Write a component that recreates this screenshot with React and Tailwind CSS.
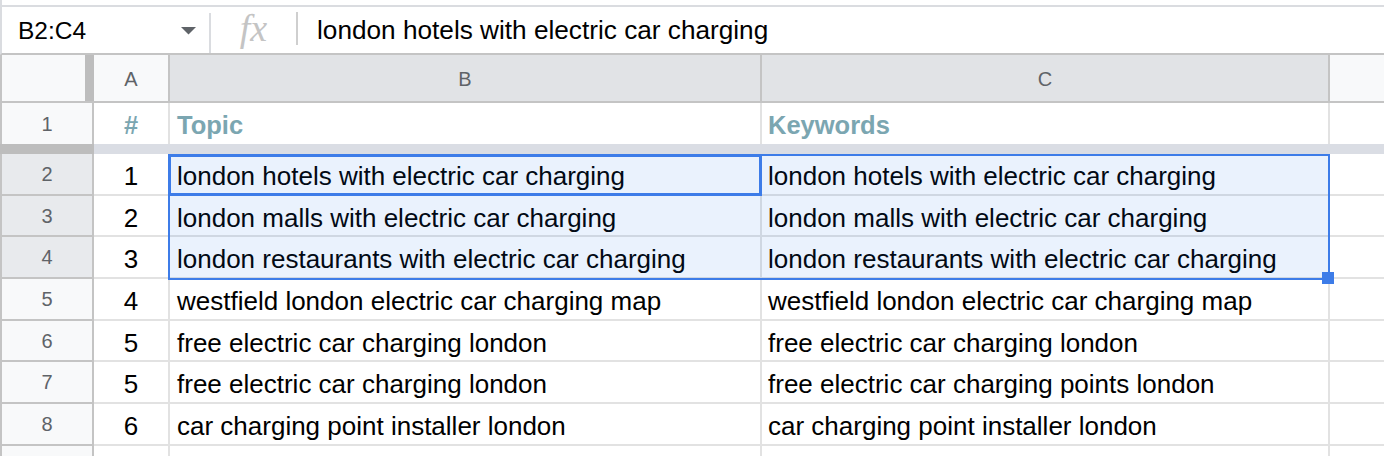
import React from "react";

const rows = [
  { n: 2, a: "1", b: "london hotels with electric car charging", c: "london hotels with electric car charging", sel: true },
  { n: 3, a: "2", b: "london malls with electric car charging", c: "london malls with electric car charging", sel: true },
  { n: 4, a: "3", b: "london restaurants with electric car charging", c: "london restaurants with electric car charging", sel: true },
  { n: 5, a: "4", b: "westfield london electric car charging map", c: "westfield london electric car charging map" },
  { n: 6, a: "5", b: "free electric car charging london", c: "free electric car charging london" },
  { n: 7, a: "5", b: "free electric car charging london", c: "free electric car charging points london" },
  { n: 8, a: "6", b: "car charging point installer london", c: "car charging point installer london" },
];

const font = { fontFamily: '"Liberation Sans", Arial, sans-serif' };

function BodyRow({ r }) {
  return (
    <div className="flex h-[41.7px] shrink-0">
      <div
        className={`w-[94px] shrink-0 flex items-center justify-center border-l-2 border-r-2 border-b-2 border-[#c4c4c4] text-[20px] text-[#5f6368] ${
          r.sel ? "bg-[#e8eaed]" : "bg-[#f8f9fa]"
        }`}
      >
        {r.n}
      </div>
      <div className="w-[76px] shrink-0 flex items-center justify-center pt-[5px] border-r-2 border-b-2 border-[#e2e2e2] text-[26px] text-black">
        {r.a}
      </div>
      <div className="w-[592px] shrink-0 flex items-center pl-[7px] pt-[5px] border-r-2 border-b-2 border-[#e2e2e2] text-[26px] text-black whitespace-nowrap overflow-hidden">
        {r.b}
      </div>
      <div className="w-[568px] shrink-0 flex items-center pl-[6px] pt-[5px] border-r-2 border-b-2 border-[#e2e2e2] text-[26px] text-black whitespace-nowrap overflow-hidden">
        {r.c}
      </div>
      <div className="flex-1 border-b-2 border-[#e2e2e2]" />
    </div>
  );
}

export default function App() {
  return (
    <div className="relative w-[1384px] h-[456px] overflow-hidden bg-white flex flex-col" style={font}>
      {/* top strip */}
      <div className="h-[7px] shrink-0 border-l-2 border-b-2 border-[#dadce0]" />
      {/* formula bar */}
      <div className="h-[48px] shrink-0 flex items-center border-l-2 border-b-2 border-[#c4c4c4] border-l-[#dadce0]">
        <div className="w-[207px] shrink-0 flex items-center pl-[16px] pr-[13px] pt-[2px] text-[24.5px] text-black">
          <span className="flex-1">B2:C4</span>
          <svg width="15" height="8" viewBox="0 0 15 8">
            <polygon points="0,0 15,0 7.5,7.5" fill="#5f6368" />
          </svg>
        </div>
        <div className="w-[2px] self-stretch mt-[6px] bg-[#dadce0]" />
        <div className="w-[85px] shrink-0 flex justify-center items-center">
          <span
            className="italic text-[38px] text-[#c4c4c4] leading-none -mt-[4px]"
            style={{ fontFamily: '"Liberation Serif", "Times New Roman", serif' }}
          >
            fx
          </span>
        </div>
        <div className="w-[2px] h-[33px] -mt-[3px] bg-[#cfcfcf]" />
        <div className="pl-[19px] pt-[2px] text-[26.2px] text-black whitespace-nowrap">
          london hotels with electric car charging
        </div>
      </div>
      {/* column headers */}
      <div className="h-[48px] shrink-0 flex border-b-2 border-[#c4c4c4]">
        <div className="w-[94px] shrink-0 flex border-l-2 border-[#c4c4c4]">
          <div className="flex-1 bg-[#f8f9fa]" />
          <div className="w-[9px] bg-[#bdbdbd]" />
        </div>
        <div className="w-[76px] shrink-0 flex items-center justify-center pt-[2px] border-r-2 border-[#c4c4c4] bg-[#f8f9fa] text-[20px] text-[#5f6368]">
          A
        </div>
        <div className="w-[592px] shrink-0 flex items-center justify-center pt-[2px] border-r-2 border-[#c4c4c4] bg-[#e1e3e6] text-[20px] text-[#5f6368]">
          B
        </div>
        <div className="w-[568px] shrink-0 flex items-center justify-center pt-[2px] border-r-2 border-[#c4c4c4] bg-[#e1e3e6] text-[20px] text-[#5f6368]">
          C
        </div>
        <div className="flex-1 bg-[#f8f9fa]" />
      </div>
      {/* row 1 */}
      <div className="h-[41px] shrink-0 flex">
        <div className="w-[94px] shrink-0 flex items-center justify-center border-l-2 border-r-2 border-[#c4c4c4] bg-[#f8f9fa] text-[20px] text-[#5f6368]">
          1
        </div>
        <div className="w-[76px] shrink-0 flex items-center justify-center pt-[4px] border-r-2 border-[#e2e2e2] text-[25.5px] font-bold text-[#7ba6b1]">
          #
        </div>
        <div className="w-[592px] shrink-0 flex items-center pl-[7px] pt-[4px] border-r-2 border-[#e2e2e2] text-[25.5px] font-bold text-[#7ba6b1]">
          Topic
        </div>
        <div className="w-[568px] shrink-0 flex items-center pl-[6px] pt-[4px] border-r-2 border-[#e2e2e2] text-[25.5px] font-bold text-[#7ba6b1]">
          Keywords
        </div>
        <div className="flex-1" />
      </div>
      {/* frozen bar */}
      <div className="h-[10px] shrink-0 flex">
        <div className="w-[94px] shrink-0 bg-[#bdbdbd]" />
        <div className="flex-1 bg-[#dadde4]" />
      </div>
      {/* body rows */}
      {rows.map((r) => (
        <BodyRow key={r.n} r={r} />
      ))}
      <div className="flex flex-1">
        <div className="w-[94px] shrink-0 border-l-2 border-r-2 border-[#c4c4c4] bg-[#f8f9fa]" />
        <div className="w-[76px] shrink-0 border-r-2 border-[#e2e2e2]" />
        <div className="w-[592px] shrink-0 border-r-2 border-[#e2e2e2]" />
        <div className="w-[568px] shrink-0 border-r-2 border-[#e2e2e2]" />
        <div className="flex-1" />
      </div>

      {/* selection overlay */}
      <div className="absolute left-[168px] top-[154px] w-[1162px] h-[126px] border-2 border-[#3d7ce8] bg-[rgba(26,115,232,0.09)] pointer-events-none" />
      <div className="absolute left-[168px] top-[154px] w-[594px] h-[42px] border-[3px] border-[#3d7ce8] pointer-events-none" />
      <div className="absolute left-[1322px] top-[272px] w-[12px] h-[12px] bg-[#3d7ce8] pointer-events-none" />
    </div>
  );
}
